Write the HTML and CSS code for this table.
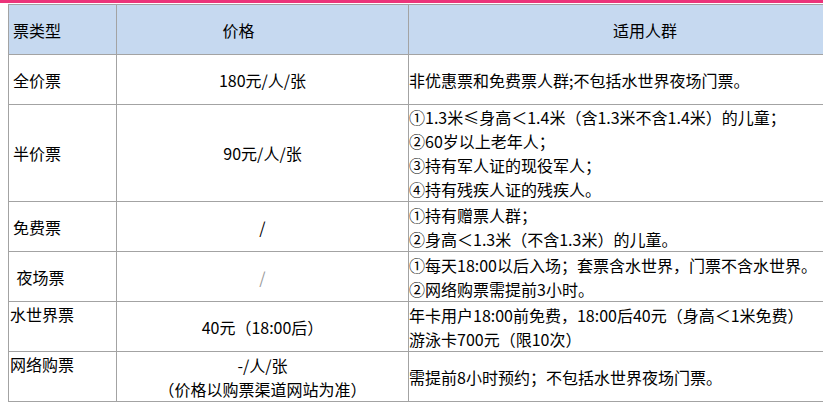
FILE: index.html
```html
<!DOCTYPE html>
<html lang="zh-CN">
<head>
<meta charset="utf-8">
<title>票价</title>
<link rel="stylesheet" href="styles.css">
</head>
<body>
<div class="topbar"></div>
<div class="frame">
<table class="tickets">
  <colgroup>
    <col class="c1"><col class="c2"><col class="c3">
  </colgroup>
  <thead>
    <tr>
      <th class="type">票类型</th>
      <th class="price price-head">价格</th>
      <th class="who who-head">适用人群</th>
    </tr>
  </thead>
  <tbody>
    <tr>
      <td class="type">全价票</td>
      <td class="price">180元/人/张</td>
      <td class="who">非优惠票和免费票人群;不包括水世界夜场门票。</td>
    </tr>
    <tr class="tall">
      <td class="type">半价票</td>
      <td class="price">90元/人/张</td>
      <td class="who">①1.3米≤身高＜1.4米（含1.3米不含1.4米）的儿童；<br>②60岁以上老年人；<br>③持有军人证的现役军人；<br>④持有残疾人证的残疾人。</td>
    </tr>
    <tr>
      <td class="type">免费票</td>
      <td class="price">/</td>
      <td class="who">①持有赠票人群；<br>②身高＜1.3米（不含1.3米）的儿童。</td>
    </tr>
    <tr>
      <td class="type">&nbsp;夜场票</td>
      <td class="price muted">/</td>
      <td class="who">①每天18:00以后入场；套票含水世界，门票不含水世界。<br>②网络购票需提前3小时。</td>
    </tr>
    <tr>
      <td class="type top">水世界票</td>
      <td class="price">40元（18:00后）</td>
      <td class="who">年卡用户18:00前免费，18:00后40元（身高＜1米免费）<br>游泳卡700元（限10次）</td>
    </tr>
    <tr>
      <td class="type top">网络购票</td>
      <td class="price">-/人/张<br>（价格以购票渠道网站为准）</td>
      <td class="who">需提前8小时预约；不包括水世界夜场门票。</td>
    </tr>
  </tbody>
</table>
</div>
</body>
</html>
```
FILE: styles.css
```css
html, body {
  margin: 0;
  padding: 0;
  background: #ffffff;
  overflow: hidden;
}

body {
  font-family: "Noto Sans CJK SC", "Noto Sans", sans-serif;
  font-size: 16px;
  color: #000000;
}

.topbar {
  height: 3px;
  background: #ec347b;
}

.frame {
  margin: 1px 0 0 8px;
  width: 815px;
  overflow: hidden;
}

.tickets {
  border-collapse: collapse;
  table-layout: fixed;
  width: 873px;
}

.c1 { width: 108px; }
.c2 { width: 292px; }
.c3 { width: 473px; }

.tickets th,
.tickets td {
  border: 1px solid #a3a3a3;
  height: 49px;
  padding: 0;
  line-height: 24px;
  font-weight: normal;
  vertical-align: middle;
  white-space: nowrap;
}

.tickets thead th {
  background: #c6d9f0;
}

.tickets .type {
  text-align: left;
  padding-left: 4px;
}

.tickets .type.top {
  vertical-align: top;
  padding-left: 1px;
}

.tickets .price {
  text-align: center;
}

.tickets .price-head {
  padding-right: 48px;
}

.tickets .who {
  text-align: left;
  padding-left: 0;
}

.tickets .who-head {
  text-align: center;
}

.tickets .muted {
  color: #9a9a9a;
}
```
